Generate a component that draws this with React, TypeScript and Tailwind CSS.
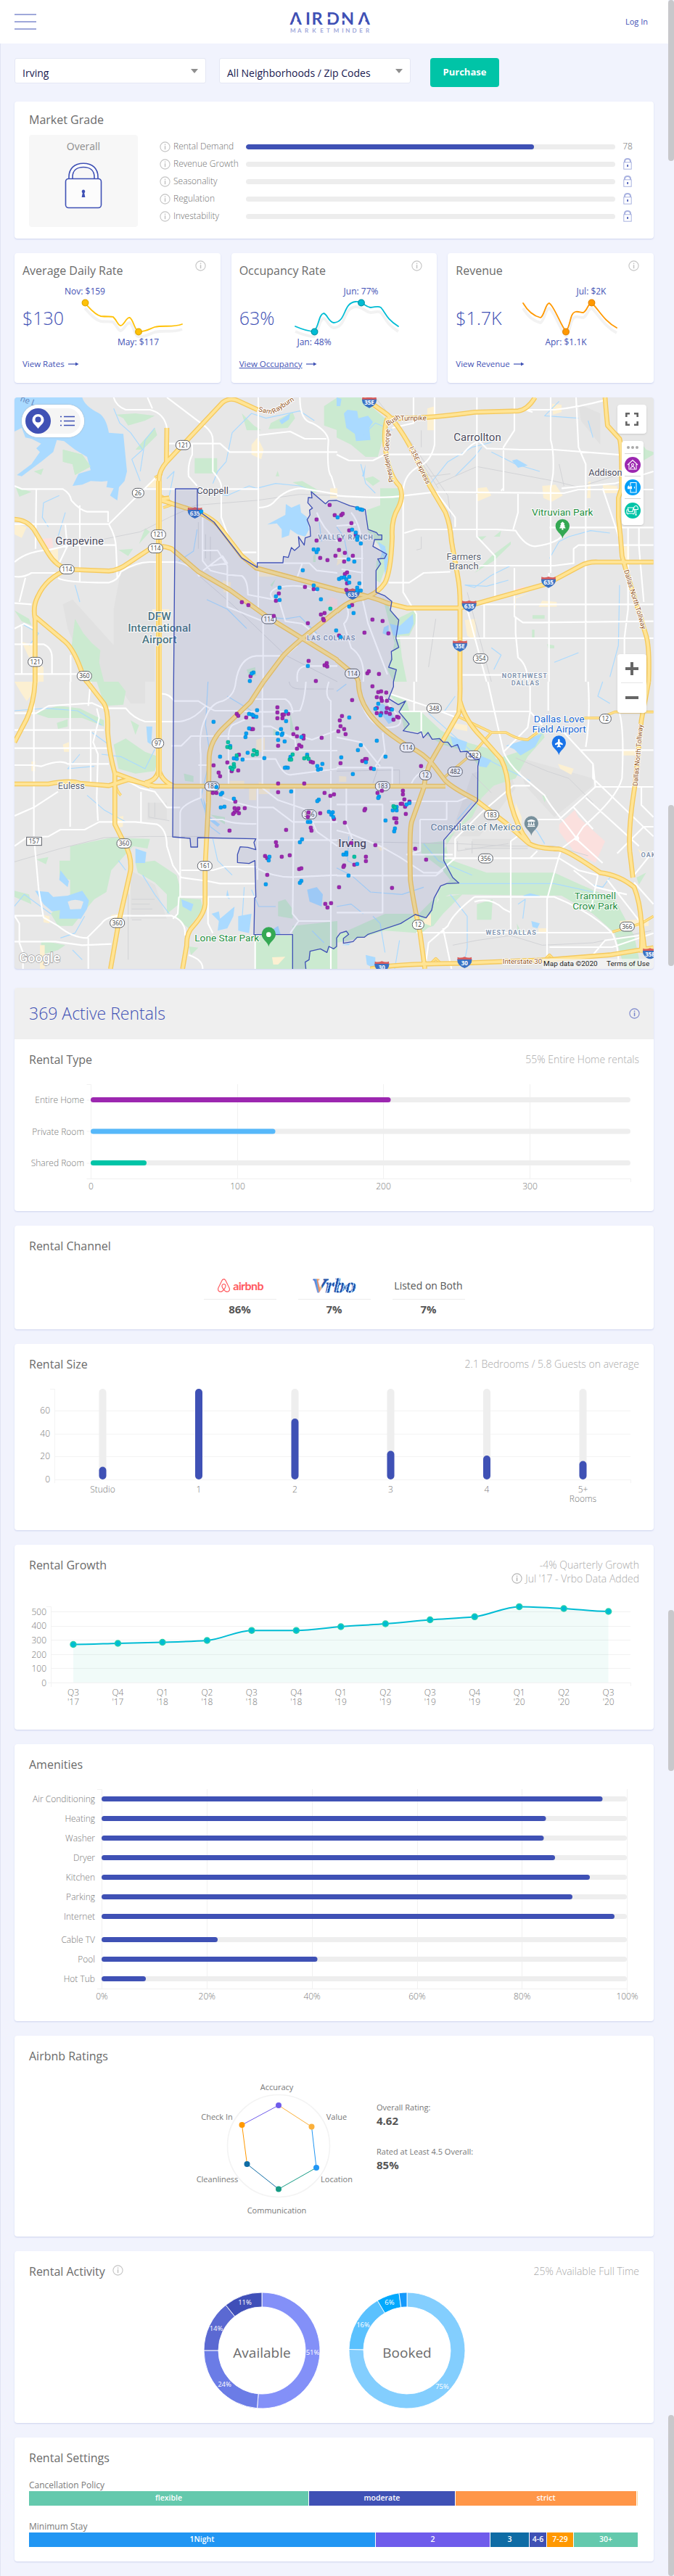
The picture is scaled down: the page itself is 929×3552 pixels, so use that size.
import React from "react";
import { FaAirbnb, FaPlane, FaTree, FaLandmark } from "react-icons/fa";

type Pt = [number, number];

const CARD = "rounded bg-white shadow-[0_1px_2px_#cdd3ee]";
const LABEL = "fill-[#777777] text-[12px] font-light";

function InfoIcon({ className = "text-[#c4c4c4]" }: { className?: string }) {
  return (
    <svg width="15" height="15" viewBox="0 0 15 15" className={`shrink-0 ${className}`}>
      <circle cx="7.5" cy="7.5" r="6.6" fill="none" stroke="currentColor" strokeWidth="1.1" />
      <rect x="6.8" y="3.6" width="1.5" height="1.5" fill="currentColor" />
      <rect x="6.8" y="6.2" width="1.5" height="5" fill="currentColor" />
    </svg>
  );
}

function CardHead({ title, note, children, h }: { title: string; note?: string; children?: React.ReactNode; h: string }) {
  return (
    <div className={`flex justify-between px-5 pt-4 ${h}`}>
      <h2 className="flex gap-[10px] text-[16px] leading-6 text-[#6b6b6b]">
        {title}
        {children}
      </h2>
      {note && <span className="text-[14px] font-light leading-6 text-[#a9a9a9]">{note}</span>}
    </div>
  );
}

function BigLock() {
  return (
    <svg width="52" height="64" viewBox="0 0 52 64" fill="none" stroke="#3f51b5" strokeWidth="1.6">
      <path d="M6 22V20C6 8 14 1.2 26 1.2S46 8 46 20V22" fill="#fff" />
      <path d="M11 22V20C11 11 17 6.5 26 6.5S41 11 41 20V22" fill="#f7f7f7" />
      <rect x="1.5" y="22.5" width="49" height="40" rx="4" fill="#fcfcfc" />
      <path d="M26 37.5a2.6 2.6 0 0 1 1.2 4.7L28.4 48h-4.8l1.2-5.8A2.6 2.6 0 0 1 26 37.5Z" fill="#3f51b5" stroke="none" />
    </svg>
  );
}

function SmallLock() {
  return (
    <svg width="12" height="16" viewBox="0 0 12 16" fill="none" stroke="#a9b2e0">
      <path d="M2 6V4.5C2 2 3.6 1 6 1s4 1 4 3.5V6" strokeWidth="2" />
      <rect x="0.8" y="5.8" width="10.4" height="9.4" />
      <rect x="5.3" y="9" width="1.6" height="3" fill="#3f51b5" stroke="none" />
    </svg>
  );
}

function Header() {
  return (
    <header className="flex h-[60px] items-center bg-white pl-5 pr-7">
      <div className="flex w-[120px] flex-col gap-2">
        <span className="h-[2px] w-[30px] bg-[#9fa8da]" />
        <span className="h-[2px] w-[30px] bg-[#9fa8da]" />
        <span className="h-[2px] w-[30px] bg-[#9fa8da]" />
      </div>
      <div className="flex flex-1 justify-center">
        <svg width="116" height="36" viewBox="400 13 116 36" className="mr-[1px] overflow-visible">
          <text x="401.500 423 431.500 452 472 495.500" y="35" className="fill-[#3f51b5] font-['Lato'] text-[23.500px] font-bold">AIRDNA</text>
          <path d="M409.300 23L413.600 35.500H405.200ZM503.300 23L507.600 35.500H499.200Z" fill="#fff" />
          <path d="M452 24.500h6v3h-6zM472 26.500h5v3h-5z" fill="#fff" />
          <text x="402 411.900 422 432.200 443.200 452 461.700 473.200 478.200 487.600 497.200 506" y="46" className="fill-[#9fa8da] font-['Lato'] text-[8px] font-bold">MARKETMINDER</text>
        </svg>
      </div>
      <div className="w-[120px] text-right text-[11px] text-[#3f51b5]">Log In</div>
    </header>
  );
}

function Select({ text }: { text: string }) {
  return (
    <div className="flex h-[35px] w-[264px] items-center justify-between rounded-[3px] border border-[#e4e7f4] bg-white pl-[10px] pr-[10px] text-[14px] font-medium text-[#17174f]">
      <span className="pt-[5px]">{text}</span>
      <svg width="10" height="6" viewBox="0 0 10 6">
        <path d="M0 0h10L5 6z" fill="#8f8f8f" />
      </svg>
    </div>
  );
}

function MarketGrade() {
  return (
    <section className={`mt-5 h-[189px] ${CARD}`}>
      <h2 className="px-5 pt-[13px] text-[16px] leading-6 text-[#6b6b6b]">Market Grade</h2>
      <div className="mt-[9px] flex pl-5">
        <div className="flex h-[127px] w-[150px] flex-col items-center rounded bg-[#f7f7f7] pt-[6px] text-[14px] leading-5 text-[#8d8d8d]">
          Overall
          <div className="mt-3">
            <BigLock />
          </div>
        </div>
        <div className="ml-[30px] mt-1 flex flex-col text-[12px] font-light text-[#6f6f6f]">
          {["Rental Demand", "Revenue Growth", "Seasonality", "Regulation", "Investability"].map((name, i) => (
            <div key={name} className="flex h-6 items-center">
              <InfoIcon />
              <span className="w-[104px] pl-1">{name}</span>
              <span className="flex h-[7px] w-[509px] overflow-hidden rounded-full bg-[#ededed]">
                {i === 0 && <span className="h-full w-[78%] rounded-full bg-[#3f51b5]" />}
              </span>
              <span className="ml-[11px] flex w-3 justify-center">{i === 0 ? <span>78</span> : <SmallLock />}</span>
            </div>
          ))}
        </div>
      </div>
    </section>
  );
}

interface Stat {
  title: string;
  value: string;
  link: string;
  underline?: boolean;
  color: string;
  ring: string;
  line: string;
  dots: Pt[];
  labels: { x: number; y: number; t: string }[];
}

const STATS: Stat[] = [
  {
    title: "Average Daily Rate", value: "$130", link: "View Rates", color: "#ffc107", ring: "#e0a800",
    line: "M117 78C123 84 130 94 139 96C147 97 154 96 156 97C162 103 162 108 166 109C171 109 174 97 179 98C184 101 186 117 191 117C200 118 205 114 213 111C225 108 238 112 251 107",
    dots: [[117.500, 77.500], [191, 117.500]],
    labels: [{ x: 117, y: 66, t: "Nov: $159" }, { x: 190.500, y: 136, t: "May: $117" }],
  },
  {
    title: "Occupancy Rate", value: "63%", link: "View Occupancy", underline: true, color: "#00bcd4", ring: "#0097a7",
    line: "M407 110C414 113 423 117 433 117C440 109 439 94 446 92C451 93 453 104 460 105C478 104 472 78 490 76C499 75 503 83 511 84C517 84 520 81 525 84C532 92 532 99 549 110",
    dots: [[433.500, 117.500], [498, 77.500]],
    labels: [{ x: 497.500, y: 66, t: "Jun: 77%" }, { x: 433, y: 136, t: "Jan: 48%" }],
  },
  {
    title: "Revenue", value: "$1.7K", link: "View Revenue", color: "#ff9800", ring: "#e58600",
    line: "M721 78C728 90 737 96 745 98C750 96 752 78 757 78C764 82 773 109 780 117C787 109 785 92 793 90C797 89 800 91 804 91C810 88 810 78 816 78C826 88 833 103 850 112",
    dots: [[780, 117.500], [815.500, 77.500]],
    labels: [{ x: 815, y: 66, t: "Jul: $2K" }, { x: 780, y: 136, t: "Apr: $1.1K" }],
  },
];

function StatCard({ s, i }: { s: Stat; i: number }) {
  const left = [100, 399, 697][i];
  return (
    <section className={`flex h-[179px] flex-1 flex-col pl-[11px] pr-5 ${CARD}`}>
      <div className="flex h-[49px] justify-between">
        <h2 className="pt-3 text-[16px] leading-6 text-[#6b6b6b]">{s.title}</h2>
        <span className="pt-[10px]"><InfoIcon /></span>
      </div>
      <div className="flex h-[96px] text-[#3f51b5]">
        <div className="w-[69px] whitespace-nowrap pt-[22px] text-[25px] font-light leading-9">{s.value}</div>
        <svg width="174" height="96" viewBox={`${left} 58 174 96`} className="overflow-visible">
          <path d={s.line} fill="none" stroke="#000" strokeOpacity="0.05" strokeWidth="4" transform="translate(0 7)" />
          <path d={s.line} fill="none" stroke={s.color} strokeWidth="1.800" strokeLinecap="round" />
          {s.dots.map(([x, y]) => (
            <circle key={x} cx={x} cy={y} r="4.300" fill={s.color} stroke={s.ring} strokeWidth="1.300" />
          ))}
          {s.labels.map((l) => (
            <text key={l.t} x={l.x} y={l.y} textAnchor="middle" className="fill-[#3f51b5] text-[12px]">{l.t}</text>
          ))}
        </svg>
      </div>
      <div className="flex items-center gap-1 text-[11.500px] leading-4 text-[#3f51b5]">
        <span className={s.underline ? "underline" : ""}>{s.link}</span>
        <svg width="17" height="8" viewBox="0 0 17 8"><path d="M1 4h11" stroke="#3f51b5" strokeWidth="1.200" /><path d="M11 1.500l4.500 2.500-4.500 2.500z" fill="#3f51b5" /></svg>
      </div>
    </section>
  );
}

/* ---------- map ---------- */
const TILES: Pt[] = [[0, 0], [1392, 0], [0, 1200], [1392, 1200]];
const at = (tile: number, pts: Pt[]): Pt[] => pts.map(([x, y]) => [x + TILES[tile][0], y + TILES[tile][1]]);

function Layer({ d, ...rest }: { d: string[] } & Omit<React.SVGProps<SVGPathElement>, "d">) {
  return (
    <>
      {d.map((p, i) => (
        <path key={i} d={p} transform={`translate(${TILES[i][0]} ${TILES[i][1]})`} {...rest} />
      ))}
    </>
  );
}

const TERRAIN = [
  "M260 880L300 860L480 1060L470 1200H370L280 980ZM500 740L640 700V1200H470V900Z",
  "M1000 50L1090 90V220L1010 120Z",
  "M480 0H600V90H540ZM540 780L640 840L690 980H540ZM610 500H690V570H610Z",
  "M560 380L700 330L740 440L590 640L470 640ZM740 310L1060 400V430L900 560L780 430ZM560 650H720V690H560Z",
];
const PARKS = [
  "M480 95L560 90L640 100L600 120L530 140L510 110ZM805 275H898V338H805ZM310 940L345 1000L380 1040L415 1070L410 1120L430 1200H370L330 1120L295 1060ZM1000 90L1050 140L1080 160L1020 160ZM1120 130L1210 85L1220 110L1190 150L1110 155ZM1340 60L1395 24V160L1340 140ZM65 395L130 415L80 435ZM140 330L180 318L170 345ZM490 655L550 650L530 680ZM600 565L620 580L575 630ZM640 150L650 180L590 240L560 240ZM400 150L440 170L450 200ZM1210 375L1250 370L1320 410L1300 420ZM1295 680L1305 670V705H1295ZM1140 775L1125 808L1118 800ZM1020 1150L1055 1140L1060 1175L1030 1180ZM1140 350L1148 328L1155 350ZM260 240L340 260L375 310L310 345L300 300L260 290ZM60 905L120 940L130 965L90 950Z",
  "M0 24H100L200 110L190 200L170 270L120 270L60 220L0 190ZM180 400L265 400L260 460L230 540L220 680L180 790L160 780L165 700L200 670L130 580L125 490L180 470ZM150 350L115 360L150 390L180 370ZM190 850L250 940L320 905L330 930L325 960L300 1010L260 1010L270 1100L290 1200H235L210 1150L240 1040L215 950ZM580 740L640 680L720 620V632L650 700L570 750ZM580 600L620 598L600 615ZM650 600L680 575L675 600ZM810 925H860V940H810ZM808 985H818V1020H808ZM870 1045L900 1050V1062H875ZM1250 200L1280 240L1310 250V260L1260 290Z",
  "M140 130L240 100L330 110L430 160V185L340 150L200 150ZM400 0H490L520 40L510 95L440 100L420 60ZM540 160L575 180L560 220ZM470 260L520 235L600 290L655 310L640 370L560 380L490 360ZM290 680L460 645L620 650L610 690L550 680L460 780L440 870L390 900L340 960L300 1010L240 1010L210 960L290 880V820L246 810V740H290ZM560 750L640 740L730 800L750 870L740 920L690 960V880L640 830L570 790ZM740 895L830 900L840 940L780 1020L730 980ZM1055 1050H1210V1188H1055ZM1210 1010L1395 990V1188H1210ZM170 1070L270 1090L240 1110L170 1130ZM60 865L120 880L130 920L60 890ZM235 170L280 155V185L240 195ZM870 550L930 560V590ZM1200 130L1218 210L1200 200ZM1150 910L1180 900L1210 940V980L1150 970ZM780 1095L820 1100L790 1130ZM150 735L200 725L190 755ZM760 380L800 390V415L765 410ZM1130 195H1170V225H1130Z",
  "M215 50L290 80L300 120L350 125L430 200L500 240L640 280L660 320L750 290L850 200L860 230L790 310L740 400L650 430L600 480L560 560L450 650L460 720L440 700L490 620L580 500L590 350L540 290L440 260L350 210L280 200L260 100ZM350 670L440 660L450 720L480 740L620 790L900 790L1010 840L1150 900L1230 1050L1260 1188H1190L1150 1040L1060 960L930 885L470 880L420 900V860L470 820L430 770L350 710ZM580 920L645 900L640 985H580ZM0 1050L200 960L340 960L420 880L400 1000L350 1040L200 1030L100 1060L0 1080ZM430 890L520 880L440 960L400 1010L340 1030ZM1240 810L1280 790L1250 840ZM745 1000L760 1030L790 1050L750 1050ZM850 470L870 475L860 500Z",
];
const TAN = [
  "M1040 220L1065 190L1090 240L1080 280L1040 260ZM60 545L110 560L90 605L60 590ZM600 395L650 345V398ZM210 650L240 650V720L215 700ZM920 780L955 790L950 830L925 830ZM1065 725L1165 745L1140 765H1070ZM1365 400H1395V440H1365ZM690 240L715 260L695 290ZM630 900H700V930H630ZM90 1035L140 1050L150 1090L120 1100ZM145 1120L180 1140V1200H150Z",
  "M375 70L405 60V160H375ZM580 400L620 395L640 430L580 455ZM850 390L905 385L935 430L890 455L855 440ZM890 50L930 55V85L895 95ZM1100 385L1160 390V420H1105ZM1185 640L1210 640V700H1185ZM730 860L800 830L740 850V900ZM850 865L910 870V890H835ZM530 945L575 940V1030L540 1010ZM10 660L30 700L0 720ZM1040 375L1050 370L1050 440H1035Z",
  "M60 0H160L135 50L110 80L90 50ZM260 260L285 250V290H265ZM130 330H145V370H130ZM485 560L510 555L508 600L485 605ZM950 410H1010V445H950ZM1060 240L1095 230V290H1060ZM1030 440H1060V490H1030ZM1070 415L1115 430V465H1070ZM460 965L490 960V990H460ZM180 965L205 970V1000L180 995ZM1125 1140L1180 1138L1150 1170H1130ZM525 850L540 840L535 880H525ZM165 1090H185V1188H165Z",
  "M10 390L40 392V415H10ZM480 170L540 180V205L490 195ZM915 340L980 360L970 385L925 360ZM740 500L765 560V590L740 560ZM1185 280L1240 285V305H1185ZM1170 990L1290 980V1010L1180 1020ZM160 670L210 690L180 700ZM835 1020H870V1035H835ZM350 995L390 960V1010ZM1245 690L1270 710L1260 720Z",
];
const PINK = [
  "M165 610L215 605L220 645L180 655ZM1345 875L1370 850L1395 860V905Z",
  "M730 820L775 805V815L735 830Z",
  "",
  "M985 530L1000 560L1110 660L1070 750L980 700L920 620V590Z",
];
const WATER = [
  "M60 24H340Q350 60 410 90Q440 110 450 170L510 175L525 330L515 370L492 395L485 450L470 440L455 430L470 400L440 395L445 370L420 372L375 370L340 385L300 390L325 340L375 325L360 270L310 240L265 205L235 200L220 250L170 290L90 350L70 345L130 300L165 250L150 235L170 215L130 195L105 190L90 150L60 165ZM1105 550L1180 510L1182 465L1205 480L1240 465L1245 500L1270 520L1278 570L1262 600L1230 590L1200 570L1195 595L1165 605V570L1145 545ZM1155 120L1200 90L1195 115L1165 135Z",
  "M30 90L45 75L85 80L90 110L130 100L150 125L135 150L140 200L80 205L75 175L40 150ZM0 24L20 30L15 60L0 60ZM235 1010L220 960L260 970L315 920L318 960L300 1000L260 1005ZM725 285L745 280L790 305L750 315ZM195 975L215 965V1010L190 1000ZM170 620L200 640L215 700L200 760L195 690ZM120 300L105 350L115 350ZM1205 245L1240 250V262L1205 255Z",
  "M145 865L200 870L220 890L280 885L340 865L368 905L360 940L335 980L245 980L248 945L215 950L180 920ZM605 185L630 185L625 260L610 250ZM560 690L605 705L600 750H560ZM250 780L285 825L280 850L245 820ZM875 960L905 950L910 980L970 930L965 970L940 1020L900 1030L905 990ZM985 970L1040 960L1030 1040L985 1030ZM1270 860L1310 850L1335 880L1330 930L1280 910ZM1090 1020L1120 1030L1150 1010L1160 1045H1100ZM840 480L870 560L910 590L900 600L850 560ZM940 860L950 900L935 890ZM750 900L800 920L790 950L755 930Z",
  "M470 225L540 250L530 290L480 260ZM580 300L640 325L620 355L590 350ZM700 265L780 240L850 215L820 270L760 305L735 280ZM120 1130L160 1140V1188L125 1170ZM170 100L190 90L220 115L245 160L215 175L190 140ZM805 990L840 1000L830 1020L810 1015ZM770 885L800 875L840 885V890H780ZM20 1090L60 1080L50 1090Z",
];
const STREAMS = [
  "M470 70L495 130L540 170L590 240L545 280L580 370M640 150L600 200L580 330M860 410L940 430L1030 390L1060 400L1140 380L1240 390L1290 410M880 380L900 330L935 290L960 170L1040 90L1100 110L1240 80L1300 120M245 430L180 460L175 520L200 560M270 500L240 600L280 640M90 960L160 1000L120 1050M740 700L800 660L815 570M855 860L940 900L1020 980M1090 930L1180 940L1240 930L1310 1000M310 800L330 870M1320 540L1330 620M700 430L720 330L690 360",
  "M110 180L160 130L230 160M100 300L120 380L160 420M380 390L460 290L560 230L640 210M640 250L740 300L840 330M530 800L570 810L640 760L720 720L800 720M530 800L620 805L710 780M880 690L920 620L960 600L1050 575L1130 585M1170 800L1165 1050L1130 1180M490 350L570 270L600 230M920 40L860 100L1000 110M1040 120L1060 190M0 560L30 600L50 700M640 1060L680 1090L650 1150M900 1120L1000 1080M170 720L200 640",
  "M60 120L190 110L320 120L420 180M420 300L500 310L600 360L640 280M360 470L430 530L520 580M450 260L380 210M590 800L640 880L700 960M860 0L850 180L870 310L830 480L870 600L910 630M880 650L900 740L960 800M330 300L280 360L390 350M0 1000L100 880L210 960M350 970L310 1040L250 1060M300 1110L340 1150M1010 850L1000 1000M1040 860L1070 930L1140 930M1290 1030L1340 1080M490 740L520 780M940 60L1040 120",
  "M0 40L40 10M0 930L60 920L110 960M50 640L45 740L80 760M0 770L60 800L140 870L270 880L360 850M490 60L440 130M380 130L560 290L800 410M360 670L420 740L560 800M470 880L540 970L540 1100L530 1150M510 835H900L1060 870M750 920L780 900L770 980M800 590L830 620L860 670M1100 0L1080 60L1130 90M200 1120L180 1000L150 970M1060 840L1100 850L1130 810M240 1188L260 1070M500 570L560 500",
];
const RAILS = [
  "M430 610L580 580L700 520L810 470L1060 450L1240 425L1395 430M820 540V650M850 590V690M870 600V700M810 750L960 880L1180 1090L1395 1200",
  "M160 24L300 200L460 430L500 740M240 120L420 400M410 385L580 310L900 370L1000 395L1210 330M350 330L390 350L470 340M350 600V650L330 655M350 160V230M920 300L940 390M540 830L640 1200M410 940L380 1140",
  "M60 745L250 690L430 645L620 640H850M545 780L530 870V1150M545 900H640M545 920H620M545 940H630M545 965H600M545 985H585M615 500V560L700 575M640 500V560M1195 0Q1200 30 1240 30H1380",
  "M0 660L500 670L720 680L900 680L1040 720M740 315L870 370L960 400L1060 500M560 380L640 460M500 660V700L710 670M0 370L260 365V430M480 1090L580 1070L720 1050L850 1090L1060 1080L1300 1030M530 690H790M560 660V710M150 420L180 330",
];
const ROADS = [
  "M470 24Q480 60 520 75H620Q680 90 690 150M610 24L630 70M690 24L850 145Q880 170 880 200V330Q915 370 915 390V520L945 600M695 215H910L950 250H1395M1068 24V900M795 215V260Q775 300 780 350L815 390M60 390L90 403H260Q290 420 295 450Q330 490 360 497H447V540M600 403H1068M60 548H450L670 330M150 405L147 650M330 470V785M450 548Q480 600 480 650L485 770M60 705Q110 660 200 655L290 635H480M60 765Q100 770 130 750H240M240 770Q260 790 450 790Q490 780 500 745Q560 705 620 705H730Q800 720 825 765M1068 480Q1110 480 1130 460Q1180 400 1250 400L1395 425M1240 24Q1240 120 1290 130Q1350 160 1358 200Q1350 330 1370 350L1385 400M1070 180L1200 165L1260 195H1350M60 1045H180Q215 1060 215 1100V1168M60 1168H330M90 970V1168M60 875L130 880M292 1090V1200M60 980L100 960L140 980M838 520V700L870 740Q940 760 1000 762Q1025 780 1025 840Q1080 850 1130 860Q1100 830 1150 810Q1250 790 1310 830M940 720V890L1088 950V1200M975 1200Q990 1100 1060 1093H1180L1230 1050M1068 710H1280L1310 740L1395 750M1310 500Q1330 560 1395 620M1150 850L1180 950L1250 960L1310 1010M840 740L920 680L940 710L870 720M838 657H900L940 720M980 665H1060M1225 780L1250 710M1230 1200Q1220 1130 1280 1135H1395M270 550L278 640L240 720M105 770L80 870",
  "M0 430Q200 445 280 430L410 415L940 420L1000 405H1310M0 260L50 285H150L200 260H520Q560 210 590 205L620 235L760 240H900L1180 262M318 24V130L230 150M405 24V220Q390 290 340 310Q280 340 275 410V830L330 920V1200M580 24V600L655 680V850M735 24V160L690 230V410M885 24V200Q900 250 895 340L885 400V750M990 24L1000 230L1030 300V1200M780 75L810 85M780 75H900Q1000 65 1110 35M280 585L330 570H660L740 575Q780 640 820 640Q900 630 930 600M1310 330L1150 380L1030 390L930 400M1100 400L1180 640M880 562H1310M590 720H900L980 710V650L1000 635H1310M215 790H300L360 750L470 745M560 880H1310M750 420V500L730 570M735 730V930L770 955H850L1310 950M740 930V1000L750 1100Q790 1130 790 1200M240 1020H1310M540 900L620 1200M878 750V1200M610 880V1020M520 1172H700M1205 560V900L1190 1020V1200M1250 560V640L1270 870M60 500Q110 560 105 700V850L130 960L210 1170M0 690H110M0 555L80 550M20 735L110 750M40 880Q60 930 30 960L60 1060Q120 1100 110 1200M410 415L490 520V560M690 400L680 410",
  "M60 130H150L200 100L380 88L430 110H520Q550 150 600 165H740Q800 160 850 100M670 50Q700 50 720 80H820Q880 120 890 120H980Q1080 130 1240 120Q1260 80 1265 0M975 0Q970 60 920 80Q870 90 850 150Q820 210 830 300V480Q750 510 745 540V890M60 200H150L170 200H430M60 275H450M140 0V640L160 860L180 975L240 1010Q300 1060 360 1060L420 1000Q440 970 500 968H710Q770 990 765 1050M60 968H180M290 0V600M375 0L365 100M375 200V420M60 345H130L170 350Q250 320 280 340H450M400 110L410 150L385 250L405 300L400 480L405 575M60 555L140 520L240 455M60 680L110 645L200 640L250 612H350L410 580H560L650 590Q690 610 690 680L715 760L750 810L860 825L910 835H1055M480 385L580 440L640 455L690 520H745M583 455V580M750 780H880L930 765H1060M740 890H1055M860 890V1000L880 1040M740 890L735 960L715 980M60 968L80 1000V1080L95 1120V1188M60 1075H230L340 1090L460 1085M365 1060V1188M780 1130Q840 1150 838 1188M1055 1046V1188M710 265H750L790 225H1240L1290 240L1395 200M1085 0V430M1065 430V820M1085 285H1395M920 480Q1000 510 1060 520H1130L1210 580H1395M1085 440L1150 490L1270 530L1310 620L1395 680M1060 655H1395M1060 770Q1130 810 1210 808L1395 800M1217 430L1210 960L1235 990H1365M1235 990L1200 1040M865 570H920Q960 590 1060 588M1000 320H1140Q1170 385 1200 385L1395 360M1360 0Q1340 60 1368 80V1188M945 430V260Q940 200 960 180L1050 140M1050 72H1180Q1210 90 1210 130M1085 185H1120L1220 240L1225 285M820 345H865",
  "M220 50L370 100L500 150M260 123H800V0M350 125V225M320 0V120M625 0L690 290Q710 340 760 385L860 470Q880 510 940 580L990 645M690 290L790 190L800 125M940 210L1060 340V400L1310 640M1010 283H1310M1040 0Q1050 150 1030 270M800 123L850 180M1180 0L1170 130Q1190 200 1180 400Q1160 480 1020 600L990 645M1065 435H1310M1070 435L920 570H830M800 430H730L600 540L490 650V730M440 730H920L1000 780L1080 800M990 645L930 690Q910 750 870 900V1188M990 650L1100 750M1030 480L1250 680M980 520L1060 610M1310 600H1270L1160 710M720 1040V660L760 630M570 890H900Q1050 950 1140 1040Q1170 1100 1165 1188M570 890Q480 960 460 1010L380 1080L365 1188M330 1038H1140M440 1020L475 1188M570 910Q640 890 690 940L720 955M880 1098H1140L1310 1040M0 355H230V430M0 508H190V955H0M220 495H500L560 470M345 570V700L290 715H480M345 570H455V495M40 430V590L65 650M0 615L60 630L180 680L260 725L360 790H420L490 730M0 802H410L440 780M100 80Q130 180 200 190Q280 190 260 150L190 60M0 230L100 250L180 350M1080 800L1050 950M980 780L1070 850L1200 880M1230 800L1310 700M1230 830L1310 920M1120 820L1260 1000M875 0V120M190 210L200 290L160 350M1060 1130L1110 1070L1250 1050M800 730L830 700M310 420Q320 390 370 360M1060 340L1070 435M1260 435V510L1310 560",
];
const HIGHWAYS = [
  "M1065 75L985 38Q950 22 920 45L770 205L690 290Q655 330 658 370V1200M690 150L688 290M60 528Q110 530 140 570L200 670Q230 720 280 735L450 742Q490 740 530 710L620 650Q660 630 710 650L820 745L950 820L1110 935L1395 1110M280 735Q190 770 155 850Q135 890 145 940V1200M145 930L270 1035Q310 1070 345 1180L360 1202M670 450L780 485Q860 510 900 550L1000 680L1060 730L1395 820M1090 1200L1165 1100Q1180 1080 1250 1020L1395 905M660 445L700 440",
  "M110 24L210 95Q250 130 300 220L385 390L450 500Q470 550 475 620L500 760Q512 820 510 900V1200M210 110Q350 115 570 85L750 80Q790 75 820 24M210 110Q190 160 205 260Q220 350 260 390Q280 430 255 480Q225 530 230 600Q225 740 200 790Q160 850 80 860Q30 880 0 910M0 820L80 835Q150 850 210 875L290 895H510L550 885L870 795L1010 720Q1040 703 1080 705H1310M1110 24Q1115 90 1120 140L1170 195Q1180 230 1178 400L1165 440V520Q1175 600 1180 680L1200 750L1280 1010Q1295 1060 1290 1200M0 1110L60 1160Q85 1180 90 1200",
  "M145 0Q140 90 110 155L60 250M657 0V390M657 360Q650 410 600 418M657 360Q665 410 720 432M360 0L430 90Q448 120 445 200Q450 290 475 380V590L515 670Q545 720 540 780L490 1000L457 1188M60 423H200Q290 405 330 420L450 430L530 405L640 432H1395M480 380Q560 410 620 432M1090 0L1035 85L930 185Q870 240 865 310L862 500L848 770V920Q845 960 800 1010Q770 1040 772 1090L755 1188",
  "M90 0Q90 80 150 150Q200 210 300 270Q360 295 400 345L450 410Q480 440 570 485L700 585L790 665Q820 690 920 692Q960 700 1090 790Q1170 800 1230 850Q1270 950 1260 1120M510 0Q512 70 505 130L390 330Q370 370 360 440L310 580Q300 620 305 820Q315 900 345 1040L365 1188M510 80Q530 160 600 230L680 320Q710 380 710 460Q730 560 770 630L795 665M0 432H450M1290 0L1260 160L1235 420Q1205 600 1212 700L1225 810M140 1188Q220 1168 500 1165L880 1150L1130 1130L1310 1100M1260 1000L1275 1120",
];
const RAMPS = ["M640 355L670 340M665 430L720 465L675 480", "", "M480 380Q470 440 500 470M440 430L520 400", "M505 145L640 210H700Q750 240 790 240L830 210M640 210L570 290L440 400M940 165L1030 150H1090L1150 125H1310M1140 1035L1260 1000L1310 970M390 1165L410 1145L430 1165M860 1150L880 1130L900 1150"];

const BOUNDARY: Pt[] = [
  ...at(0, [[725, 402], [816, 402], [816, 490], [885, 540], [1000, 688], [1064, 727], [1064, 708], [1170, 708], [1172, 682], [1192, 686], [1205, 645], [1218, 657], [1238, 640], [1234, 600], [1258, 635], [1262, 605], [1284, 598], [1282, 560], [1270, 530], [1282, 510], [1280, 490], [1292, 482], [1273, 460], [1275, 438], [1290, 440], [1287, 414], [1346, 464], [1360, 451]]),
  ...at(1, [[0, 450], [55, 472], [118, 487], [130, 570], [165, 583], [172, 593], [187, 593], [187, 612], [157, 612], [150, 640], [207, 672], [198, 690], [170, 692], [182, 712], [163, 740], [163, 830], [200, 845], [228, 868], [222, 905], [257, 945], [245, 1020], [257, 1058], [226, 1075], [228, 1108], [215, 1140], [247, 1150], [235, 1200]]),
  ...at(3, [[235, 20], [215, 70], [255, 95], [285, 80], [258, 125], [300, 175], [275, 203], [335, 215], [350, 207], [358, 232], [378, 210], [395, 238], [425, 235], [440, 250], [460, 250], [475, 270], [500, 260], [512, 290], [540, 288], [570, 320], [590, 320], [584, 350], [583, 493], [443, 655], [443, 740], [480, 810], [506, 833], [455, 835], [430, 845], [403, 895], [393, 945], [370, 977], [325, 963], [265, 1000], [130, 1045], [115, 1057], [85, 1057], [68, 1075], [28, 1082], [28, 1062], [50, 1045], [40, 1032], [15, 1040], [0, 1060]]),
  ...at(2, [[1392, 1095], [1380, 1105], [1360, 1095], [1352, 1120], [1325, 1105], [1282, 1115], [1278, 1150], [1262, 1160], [1265, 1190], [1210, 1190], [1210, 1046], [1050, 1046], [1053, 895], [1058, 890], [1054, 740], [1030, 752], [982, 748], [982, 715], [993, 683], [1025, 685], [1058, 695], [1050, 665], [1058, 650], [817, 645], [817, 684], [789, 684], [786, 648], [714, 642], [718, 0]]),
];

const PURPLE: Pt[] = [
  ...at(0, [[1363, 469], [1384, 511], [1309, 529], [1309, 616], [1324, 688], [1354, 697], [1387, 679], [1261, 808], [1297, 817], [1153, 835], [1141, 865], [1000, 871], [1027, 883], [1132, 928], [1342, 916], [1327, 922], [1336, 940], [1339, 946], [1273, 958], [1276, 1114], [1351, 1123], [1342, 1132], [1353, 1137], [1036, 1177], [1306, 1197]]),
  ...at(1, [[19, 511], [25, 505], [61, 544], [52, 574], [13, 613], [79, 592], [10, 655], [34, 667], [67, 679], [31, 703], [43, 748], [34, 755], [43, 793], [40, 820], [64, 883], [148, 943], [190, 949], [115, 997], [214, 1000], [10, 1009], [127, 1165], [133, 1157], [175, 1168]]),
  ...at(2, [[979, 133], [985, 141], [1018, 148], [1048, 145], [1040, 196], [1046, 196], [1147, 106], [1147, 127], [1147, 151], [1168, 136], [1168, 151], [1192, 133], [1174, 136], [1228, 193], [1213, 217], [1228, 226], [1255, 223], [1255, 235], [1330, 232], [1237, 262], [1246, 268], [1228, 277], [1150, 265], [988, 302], [940, 334], [883, 346], [904, 376], [910, 391], [958, 370], [985, 367], [1285, 331], [1294, 334], [1150, 421], [1258, 421], [1150, 457], [880, 460], [895, 460], [1342, 460], [1366, 472], [1381, 466], [973, 496], [1012, 523], [970, 523], [986, 524], [980, 533], [970, 540], [988, 544], [964, 547], [1276, 541], [1273, 559], [1324, 544], [1381, 568], [1285, 604], [1288, 616], [949, 616], [1183, 613], [1141, 664], [1144, 679], [1096, 721], [1105, 730], [1165, 724], [1198, 718], [1237, 775], [1246, 772], [1105, 799], [1345, 919], [1369, 916], [1354, 934]]),
  ...at(3, [[148, 19], [64, 76], [172, 43], [184, 40], [205, 45], [166, 64], [184, 67], [187, 79], [208, 79], [208, 109], [166, 109], [166, 130], [184, 130], [205, 127], [220, 133], [223, 113], [250, 145], [256, 148], [235, 157], [22, 142], [13, 160], [16, 184], [31, 196], [7, 205], [37, 217], [16, 337], [106, 328], [118, 320], [124, 320], [142, 358], [349, 349], [169, 460], [187, 451], [274, 451], [274, 466], [280, 487], [265, 505], [271, 505], [301, 496], [283, 517], [286, 547], [118, 526], [115, 532], [238, 565], [247, 566], [247, 583], [34, 583], [61, 667], [160, 676], [325, 691], [370, 736], [121, 724], [121, 742], [73, 757], [31, 760], [28, 766], [10, 850], [229, 853]]),
];
const BLUE: Pt[] = [
  ...at(0, [[832, 496], [1297, 653], [1315, 653], [1309, 664], [1252, 739], [1297, 802], [1312, 817], [1156, 811], [1141, 847], [1156, 862], [1327, 859], [1390, 988], [1273, 1135], [1048, 1162], [1041, 1166], [1033, 1197]]),
  ...at(1, [[4, 520], [85, 482], [98, 487], [106, 489], [64, 571], [79, 583], [85, 600], [85, 613], [100, 628], [49, 694], [73, 703], [10, 775], [20, 770], [32, 768], [40, 777], [52, 766], [52, 790], [94, 793], [85, 811], [100, 823], [85, 823], [52, 889], [70, 916], [16, 1015]]),
  ...at(2, [[883, 166], [1063, 118], [1030, 133], [1042, 136], [1048, 140], [1060, 145], [1030, 193], [1018, 214], [1015, 229], [1183, 123], [1183, 163], [1162, 196], [1147, 214], [1168, 214], [1165, 220], [1150, 241], [1177, 247], [1246, 229], [952, 266], [910, 310], [1024, 294], [967, 317], [979, 319], [1003, 322], [1093, 316], [1270, 302], [1201, 311], [1183, 355], [1190, 356], [1178, 356], [1312, 349], [1333, 340], [1315, 364], [1327, 361], [895, 436], [919, 460], [913, 466], [967, 484], [1204, 454], [1318, 488], [1312, 494], [1360, 538], [1376, 540], [1370, 550], [1378, 560], [913, 520], [928, 517], [1273, 580], [1283, 580], [1249, 652], [1240, 664], [1114, 724], [1111, 739], [1246, 824], [1240, 832], [1099, 838]]),
  ...at(3, [[172, 91], [160, 112], [181, 139], [229, 115], [52, 148], [166, 244], [100, 262], [88, 283], [19, 313], [202, 310], [121, 333], [154, 361], [67, 382], [175, 475], [172, 481], [289, 508], [301, 502], [248, 518], [232, 532], [248, 532], [202, 574], [241, 607], [238, 619], [40, 707], [28, 715], [40, 715], [85, 754], [49, 802]]),
];
const TEAL: Pt[] = [
  ...at(0, [[1366, 898]]),
  ...at(2, [[943, 250], [940, 270], [952, 273], [979, 305], [1050, 284], [1062, 290], [1046, 303], [1062, 300], [967, 341], [953, 355], [968, 352], [961, 362], [1210, 301], [1198, 322], [1204, 322], [1258, 317], [1270, 310], [1276, 319]]),
  ...at(3, [[235, 515], [241, 520], [73, 724]]),
];

const SHIELDS: [number, number, number, string][] = [
  [0, 757, 221, "121"], [0, 571, 419, "26"], [0, 655, 591, "121"], [0, 643, 648, "114"], [0, 277, 735, "114"], [0, 1112, 941, "114"], [0, 146, 1118, "121"], [0, 349, 1176, "360"],
  [1, 595, 1104, "354"], [1, 65, 1166, "114"],
  [2, 653, 255, "97"], [2, 877, 433, "183"], [2, 1279, 549, "356"], [2, 513, 669, "360"], [2, 847, 762, "161"], [2, 485, 998, "360"],
  [3, 403, 110, "348"], [3, 1111, 153, "12"], [3, 292, 272, "114"], [3, 566, 305, "482"], [3, 490, 372, "482"], [3, 367, 387, "12"], [3, 190, 432, "183"], [3, 641, 551, "183"], [3, 616, 731, "356"], [3, 337, 1005, "12"], [3, 1201, 1013, "366"],
];
const INTERSTATES: [number, number, number, string][] = [
  [0, 806, 502, "635"], [1, 135, 45, "35E"], [1, 66, 838, "635"], [1, 548, 888, "635"], [1, 876, 789, "635"], [1, 510, 1053, "35E"], [3, 529, 1162, "30"], [3, 187, 1180, "30"], [3, 1296, 1126, "35E"],
];
const PLACES: [number, number, number, string, string][] = [
  [0, 329, 634, "Grapevine", "fill-[#4a4a5c] text-[45px]"],
  [0, 879, 423, "Coppell", "fill-[#4a4a5c] text-[39px]"],
  [0, 659, 945, "DFW", "fill-[#4a7583] text-[46px] font-medium"],
  [0, 659, 993, "International", "fill-[#4a7583] text-[46px] font-medium"],
  [0, 659, 1042, "Airport", "fill-[#4a7583] text-[46px] font-medium"],
  [1, 582, 205, "Carrollton", "fill-[#4a4a5c] text-[45px]"],
  [1, 1111, 347, "Addison", "fill-[#4a4a5c] text-[38px]"],
  [1, 526, 696, "Farmers", "fill-[#5a5f6e] text-[39px]"],
  [1, 526, 735, "Branch", "fill-[#5a5f6e] text-[39px]"],
  [1, 934, 512, "Vitruvian Park", "fill-[#1e8e3e] text-[41px]"],
  [1, 778, 1185, "NORTHWEST", "fill-[#8496b0] text-[27px] font-bold tracking-[3px]"],
  [3, 781, 14, "DALLAS", "fill-[#8496b0] text-[27px] font-bold tracking-[3px]"],
  [1, 38, 612, "VALLEY RANCH", "fill-[#8496b0] text-[27px] font-bold tracking-[3px]"],
  [1, -22, 1029, "LAS COLINAS", "fill-[#8496b0] text-[27px] font-bold tracking-[3px]"],
  [2, 295, 445, "Euless", "fill-[#5a5f6e] text-[38px]"],
  [2, 938, 1074, "Lone Star Park", "fill-[#1e8e3e] text-[41px]"],
  [3, 65, 685, "Irving", "fill-[#4a4a5c] text-[46px] font-medium"],
  [3, 920, 168, "Dallas Love", "fill-[#1a67d2] text-[41px]"],
  [3, 920, 210, "Field Airport", "fill-[#1a67d2] text-[41px]"],
  [3, 576, 615, "Consulate of Mexico", "fill-[#5f7d95] text-[41px]"],
  [3, 1069, 900, "Trammell", "fill-[#1e8e3e] text-[41px]"],
  [3, 1069, 942, "Crow Park", "fill-[#1e8e3e] text-[41px]"],
  [3, 722, 1046, "WEST DALLAS", "fill-[#8496b0] text-[27px] font-bold tracking-[3px]"],
  [3, 1290, 726, "OAK", "fill-[#8496b0] text-[27px] font-bold tracking-[3px]"],
  [3, 768, 1166, "Interstate 30", "fill-[#94561c] text-[29px]"],
];

function Pin({ x, y, color, children }: { x: number; y: number; color: string; children: React.ReactNode }) {
  return (
    <g transform={`translate(${x} ${y})`}>
      <path d="M0 50C-4 28-29 22-29-2A29 29 0 1 1 29-2C29 22 4 28 0 50Z" fill={color} />
      {children}
    </g>
  );
}

function MapDots({ pts, fill, stroke }: { pts: Pt[]; fill: string; stroke: string }) {
  return (
    <>
      {pts.map(([x, y], i) => (
        <rect key={i} x={x - 7} y={y - 7} width="14" height="14" rx="4" fill={fill} stroke={stroke} strokeWidth="2" />
      ))}
    </>
  );
}

function CityMap() {
  const halo = { stroke: "#fff", strokeWidth: 6, paintOrder: "stroke" as const, strokeLinejoin: "round" as const };
  return (
    <section className="relative mt-5 h-[788px] overflow-hidden rounded bg-[#e7e7e7] shadow-[0_1px_2px_#cdd3ee] font-['Roboto']">
      <svg width="881" height="788" viewBox="60 24 2643 2364" className="block">
        <Layer d={TERRAIN} fill="#e1e1e1" />
        <Layer d={PARKS} fill="#cbead0" />
        <Layer d={TAN} fill="#fcf0d2" />
        <Layer d={PINK} fill="#fbe0de" />
        <Layer d={WATER} fill="#aadaff" />
        <path d="M260 240L340 260L375 310L310 345L300 300L260 290Z" fill="#cbead0" />
        <path d="M280 2110Q310 2095 345 2110L335 2140L290 2142Z" fill="#e7e7e7" />
        <Layer d={STREAMS} fill="none" stroke="#aadaff" strokeWidth="3.500" strokeLinejoin="round" />
        <Layer d={RAILS} fill="none" stroke="#d2d3d6" strokeWidth="3" />
        <Layer d={ROADS} fill="none" stroke="#ffffff" strokeWidth="6.500" strokeLinejoin="round" />
        <Layer d={RAMPS} fill="none" stroke="#f5c95c" strokeWidth="11" strokeLinejoin="round" />
        <Layer d={RAMPS} fill="none" stroke="#ffe18a" strokeWidth="6" strokeLinejoin="round" />
        <Layer d={HIGHWAYS} fill="none" stroke="#f5c95c" strokeWidth="20" strokeLinejoin="round" />
        <Layer d={HIGHWAYS} fill="none" stroke="#ffe495" strokeWidth="12" strokeLinejoin="round" />
        <path d="M657 370V1590" stroke="#f5c95c" strokeWidth="24" />
        <path d="M651 370V1590M664 370V1590" stroke="#ffe08a" strokeWidth="8" />
        <circle cx="2385" cy="1848" r="10" fill="#fff" />
        {PLACES.map(([t, x, y, s, c]) => (
          <text key={s + y} x={x + TILES[t][0]} y={y + TILES[t][1]} textAnchor="middle" className={c} {...halo}>{s}</text>
        ))}
        <g className="fill-[#94561c] text-[28px]" {...halo}>
          <text transform="translate(1068 82) rotate(12)">Sam</text>
          <text transform="translate(1132 92) rotate(-33)">Rayburn</text>
          <text transform="translate(1628 372) rotate(-102)">President</text>
          <text transform="translate(1608 246) rotate(-87)">George</text>
          <text transform="translate(1604 142) rotate(-32)">Bush</text>
          <text transform="translate(1656 120) rotate(-1)">Turnpike</text>
          <text transform="translate(1692 232) rotate(65)">I-35E Express</text>
          <text transform="translate(2580 740) rotate(73)">Dallas North Tollway</text>
          <text transform="translate(2636 1632) rotate(-85)">Dallas North Tollway</text>
        </g>
        <text transform="translate(82 38) rotate(20)" className="fill-[#6a8fc4] text-[36px]">ne L</text>
        <g className="font-['Open_Sans'] text-[25px]">
          {SHIELDS.map(([t, x, y, s], i) => (
            <g key={i} transform={`translate(${x + TILES[t][0]} ${y + TILES[t][1]})`}>
              <rect x={s.length < 3 ? -24 : -30} y="-19" width={s.length < 3 ? 48 : 60} height="38" rx="18" fill="#fff" stroke="#5c5f66" strokeWidth="3" />
              <text y="9" textAnchor="middle" fill="#3c4043">{s}</text>
            </g>
          ))}
          <g transform="translate(141 1860)">
            <rect x="-31" y="-17" width="62" height="34" fill="#fff" stroke="#5c5f66" strokeWidth="3" />
            <text y="9" textAnchor="middle" fill="#3c4043">157</text>
          </g>
          {INTERSTATES.map(([t, x, y, s], i) => (
            <g key={i} transform={`translate(${x + TILES[t][0]} ${y + TILES[t][1]})`}>
              <path d="M-29-23Q-16-17 0-24Q16-17 29-23L30-10H-30Z" fill="#d75c5c" />
              <path d="M-30-13H30Q32 10 0 23Q-32 10-30-13Z" fill="#3a72c4" />
              <text y="10" textAnchor="middle" fill="#fff" className="text-[24px] font-bold">{s}</text>
            </g>
          ))}
        </g>
        <polygon points={BOUNDARY.map((p) => p.join(",")).join(" ")} fill="#3f51b5" fillOpacity="0.12" stroke="#3f51b5" strokeWidth="4" strokeLinejoin="round" />
        <MapDots pts={PURPLE} fill="#9c27b0" stroke="#7d1f93" />
        <MapDots pts={BLUE} fill="#03a0f5" stroke="#0288d1" />
        <MapDots pts={TEAL} fill="#00c4a7" stroke="#009e83" />
        <Pin x={2326} y={558} color="#34a853"><FaTree x={-17} y={-20} size={34} color="#fff" /></Pin>
        <Pin x={2311} y={1454} color="#1a73e8"><g transform="rotate(-90)"><FaPlane x={-18} y={-18} size={36} color="#fff" /></g></Pin>
        <Pin x={2197} y={1787} color="#78909c"><FaLandmark x={-16} y={-18} size={32} color="#fff" /></Pin>
        <Pin x={1111} y={2246} color="#34a853"><circle r="10" fill="#fff" /></Pin>
        <text x="78" y="2360" className="fill-white text-[54px] font-medium" stroke="#9a9a9a" strokeWidth="4" paintOrder="stroke">Google</text>
        <rect x="2243" y="2346" width="460" height="42" fill="#f5f5f5" fillOpacity="0.7" />
        <g className="fill-[#222] text-[29px]">
          <text x="2247" y="2376" textLength="224" lengthAdjust="spacingAndGlyphs">Map data ©2020</text>
          <text x="2508" y="2376" textLength="178" lengthAdjust="spacingAndGlyphs">Terms of Use</text>
        </g>
      </svg>

      <div className="absolute left-[10px] top-[10px] flex h-[45px] w-[86px] items-center rounded-full bg-[#f5f5f5] shadow-[0_0_2px_#aaa] ring-[5px] ring-inset ring-white">
        <span className="ml-[5px] flex h-[35px] w-[35px] items-center justify-center rounded-full bg-[#3f51b5]">
          <svg width="17" height="20" viewBox="0 0 17 20"><path d="M8.500 0A8 8 0 0 0 .5 8C.5 13 5 15 8.500 20C12 15 16.500 13 16.500 8A8 8 0 0 0 8.500 0Z" fill="#fff" /><circle cx="8.500" cy="7.500" r="4" fill="#3f51b5" /></svg>
        </span>
        <svg width="20" height="15" viewBox="0 0 20 15" className="ml-[13px]" stroke="#3f51b5" strokeWidth="1.700"><path d="M0 1.500h2M5 1.500h15M0 7.500h2M5 7.500h15M0 13.500h2M5 13.500h15" /></svg>
      </div>

      <div className="absolute right-[10px] top-[10px] flex h-10 w-10 items-center justify-center rounded-sm bg-white shadow">
        <svg width="18" height="18" viewBox="0 0 18 18" fill="none" stroke="#666" strokeWidth="2.600"><path d="M1.300 6V1.300H6M12 1.300h4.700V6M16.700 12v4.700H12M6 16.700H1.300V12" /></svg>
      </div>

      <div className="absolute right-[14px] top-[60px] flex h-[116px] w-[30px] flex-col items-center rounded-sm bg-white shadow">
        <div className="flex h-[18px] w-[22px] items-center justify-center gap-[2px] border-b border-[#d4d4d4]">
          <i className="h-1 w-1 rounded-full bg-[#aaa]" /><i className="h-1 w-1 rounded-full bg-[#aaa]" /><i className="h-1 w-1 rounded-full bg-[#aaa]" />
        </div>
        <div className="flex h-[31px] w-[22px] items-center border-b border-[#d4d4d4]">
          <svg width="22" height="22" viewBox="0 0 22 22" fill="none" stroke="#fff" strokeWidth="1.100"><circle cx="11" cy="11" r="11" fill="#9c27b0" stroke="none" /><path d="M4 11L11 4.500L18 11M6 10V17H16V10M8.500 17V14.500Q11 12.500 13.500 14.500V17" /><circle cx="11" cy="10.800" r="1.600" /></svg>
        </div>
        <div className="flex h-[31px] w-[22px] items-center border-b border-[#d4d4d4]">
          <svg width="22" height="22" viewBox="0 0 22 22" fill="none" stroke="#fff" strokeWidth="1.100"><circle cx="11" cy="11" r="11" fill="#039ff7" stroke="none" /><path d="M8 8V4.500H16V18H8V13.500M13.500 10V12.500M6 8.500L5 10M8 8.500L9 10" /><path d="M4.500 10.300H9.500V12.700H4.500Z" fill="#fff" /></svg>
        </div>
        <div className="flex h-[31px] w-[22px] items-center">
          <svg width="22" height="22" viewBox="0 0 22 22" fill="none" stroke="#fff" strokeWidth="1.100"><circle cx="11" cy="11" r="11" fill="#00c4a7" stroke="none" /><path d="M4.500 10V7H12V10M3 10H5.500V12.500H11V10H13.500V15H3ZM4.500 15V16.500M12 15V16.500M15.500 10V17M14 17H17M12.500 9.500Q12.500 4.500 15.500 4.500T18.500 9.500Z" /></svg>
        </div>
      </div>

      <div className="absolute right-[10px] top-[354px] flex h-[81px] w-10 flex-col items-center rounded-sm bg-white shadow">
        <div className="flex h-10 w-[30px] items-center justify-center border-b border-[#e6e6e6]">
          <svg width="18" height="18" viewBox="0 0 18 18" fill="#666"><path d="M7 0h4v7h7v4h-7v7H7v-7H0V7h7z" /></svg>
        </div>
        <div className="flex h-10 items-center"><span className="h-1 w-[18px] bg-[#666]" /></div>
      </div>
    </section>
  );
}

/* ---------- charts ---------- */
function HBar({ y, end, x, max, color }: { y: number; end: number; x: number; max: number; color: string }) {
  return (
    <>
      <rect x={x} y={y - 3.500} width={max - x} height="7" rx="3.500" fill="#eeeeee" />
      <rect x={x} y={y - 3.500} width={end - x} height="7" rx="3.500" fill={color} />
    </>
  );
}

function RentalType() {
  const rows: [string, number, number, string][] = [["Entire Home", 1516.5, 538.5, "#9c27b0"], ["Private Room", 1560, 379.5, "#56b8fa"], ["Shared Room", 1603.5, 202, "#00c4a7"]];
  return (
    <section className={`mt-[26px] h-[308px] overflow-hidden ${CARD}`}>
      <div className="flex h-[71px] items-center justify-between bg-[#efefef] pl-5 pr-[19px] text-[#3f51b5]">
        <h1 className="text-[23px] font-light">369 Active Rentals</h1>
        <InfoIcon className="text-[#7985cb]" />
      </div>
      <CardHead title="Rental Type" note="55% Entire Home rentals" h="h-[52px]" />
      <svg width="881" height="185" viewBox="20 1485 881 185" className="block">
        <path d="M119.500 1495.500H125.500V1625M119.500 1625.500H869.500V1630M327.500 1495V1625M528.500 1495V1625M730.500 1495V1625M119.500 1517H125M119.500 1560H125M119.500 1604H125" fill="none" stroke="#f1f1f1" />
        {rows.map(([name, y, end, color]) => (
          <g key={name}>
            <text x="116" y={y + 4.500} textAnchor="end" className={LABEL}>{name}</text>
            <HBar y={y} end={end} x={125} max={869} color={color} />
          </g>
        ))}
        {[[125.5, 0], [327.5, 100], [528.5, 200], [730.5, 300]].map(([x, v]) => (
          <text key={v} x={x} y="1640" textAnchor="middle" className={LABEL}>{v}</text>
        ))}
      </svg>
    </section>
  );
}

function RentalChannel() {
  const cell = "flex w-[100px] flex-col items-center";
  const top = "flex h-[38px] w-full items-center justify-center border-b border-[#ececec]";
  const pct = "pt-px text-[15px] font-bold leading-6 text-[#555]";
  return (
    <section className={`mt-5 h-[143px] ${CARD}`}>
      <CardHead title="Rental Channel" h="h-[64px]" />
      <div className="flex justify-center gap-[30px]">
        <div className={cell}>
          <div className={`${top} gap-[2px] text-[#ff5a5f]`}>
            <FaAirbnb size={21} />
            <span className="font-['Lato'] text-[16px] font-bold tracking-[-0.6px]">airbnb</span>
          </div>
          <span className={pct}>86%</span>
        </div>
        <div className={cell}>
          <div className={top}>
            <svg width="68" height="26" viewBox="0 0 68 26">
              <defs>
                <linearGradient id="vrbo" gradientUnits="userSpaceOnUse" x1="0" y1="0" x2="4" y2="1" spreadMethod="repeat">
                  <stop offset="0" stopColor="#1a3f92" /><stop offset="0.65" stopColor="#2f74d0" /><stop offset="0.75" stopColor="#d9ecfa" /><stop offset="1" stopColor="#8cbdec" />
                </linearGradient>
                <linearGradient id="vrboV" gradientUnits="userSpaceOnUse" x1="2" y1="0" x2="20" y2="-3">
                  <stop offset="0.1" stopColor="#2c6bd0" /><stop offset="0.35" stopColor="#6aa5e6" /><stop offset="0.4" stopColor="#f08c52" /><stop offset="0.6" stopColor="#e9c79c" /><stop offset="0.7" stopColor="#2655a8" />
                </linearGradient>
              </defs>
              <text x="3" y="22" textLength="61" lengthAdjust="spacingAndGlyphs" strokeWidth="0.900" className="font-['Liberation_Serif'] text-[27px] font-bold italic"><tspan fill="url(#vrboV)" stroke="url(#vrboV)">V</tspan><tspan fill="url(#vrbo)" stroke="url(#vrbo)">rbo</tspan></text>
            </svg>
          </div>
          <span className={pct}>7%</span>
        </div>
        <div className={cell}>
          <div className={`${top} whitespace-nowrap text-[14px] text-[#555]`}>Listed on Both</div>
          <span className={pct}>7%</span>
        </div>
      </div>
    </section>
  );
}

function RentalSize() {
  const bars: [number, number, string][] = [[141.5, 2022.5, "Studio"], [274, 1915, "1"], [406.5, 1956, "2"], [538.5, 2000.5, "3"], [671, 2007, "4"], [803.5, 2014.5, "5+"]];
  return (
    <section className={`mt-5 h-[257px] ${CARD}`}>
      <CardHead title="Rental Size" note="2.1 Bedrooms / 5.8 Guests on average" h="h-[52px]" />
      <svg width="881" height="200" viewBox="20 1905 881 200" className="block">
        <path d="M69 1915.500H75.500V2045M75 1945.500H869M75 1977.500H869M75 2008.500H869M75 2040.500H869.500V2045" fill="none" stroke="#f3f3f3" />
        {[[1945.5, 60], [1977.5, 40], [2008.5, 20], [2040.5, 0]].map(([y, v]) => (
          <text key={v} x="69" y={y + 3.500} textAnchor="end" className={LABEL}>{v}</text>
        ))}
        {bars.map(([x, y, name]) => (
          <g key={name}>
            <rect x={x - 5} y="1915" width="10" height="125" rx="5" fill="#eeeeee" />
            <rect x={x - 5} y={y} width="10" height={2040 - y} rx="5" fill="#3f51b5" />
            <text x={x} y="2058" textAnchor="middle" className={LABEL}>{name}</text>
          </g>
        ))}
        <text x="803.500" y="2071" textAnchor="middle" className={LABEL}>Rooms</text>
      </svg>
    </section>
  );
}

function RentalGrowth() {
  const ys = [2267.5, 2266, 2264.5, 2262, 2248.2, 2248.2, 2243, 2239, 2233.5, 2229.3, 2215.4, 2218, 2222];
  const pts: Pt[] = ys.map((y, i) => [101 + i * 61.47, y]);
  const slope = (i: number) => {
    if (i === 0 || i === ys.length - 1) return 0;
    const a = ys[i] - ys[i - 1];
    const b = ys[i + 1] - ys[i];
    return a * b <= 0 ? 0 : (2 * a * b) / (a + b);
  };
  const line = pts
    .map(([x, y], i) => (i === 0 ? `M${x} ${y}` : `C${x - 41} ${pts[i - 1][1] + slope(i - 1) / 3} ${x - 20.5} ${y - slope(i) / 3} ${x} ${y}`))
    .join("");
  const quarters = ["Q3 '17", "Q4 '17", "Q1 '18", "Q2 '18", "Q3 '18", "Q4 '18", "Q1 '19", "Q2 '19", "Q3 '19", "Q4 '19", "Q1 '20", "Q2 '20", "Q3 '20"];
  return (
    <section className={`mt-5 h-[255px] ${CARD}`}>
      <div className="flex h-[70px] justify-between px-5 pt-4">
        <h2 className="text-[16px] leading-6 text-[#6b6b6b]">Rental Growth</h2>
        <div className="text-right text-[14px] font-light leading-[19px] text-[#a9a9a9]">
          <div className="pt-[2px]">-4% Quarterly Growth</div>
          <div className="flex items-center justify-end gap-1"><InfoIcon className="text-[#b5b5b5]" />Jul '17 - Vrbo Data Added</div>
        </div>
      </div>
      <svg width="881" height="180" viewBox="20 2200 881 180" className="block">
        <path d="M64 2215.500H70.500V2326M70 2222.500H869M70 2242.500H869M70 2261.500H869M70 2281.500H869M70 2300.500H869M66 2320.500H869.500V2325" fill="none" stroke="#f2f2f2" />
        <path d={`${line}V2320H101Z`} fill="#00bf8a" fillOpacity="0.055" />
        <path d={line} fill="none" stroke="#00bcd4" strokeWidth="2" />
        {[[2222.5, 500], [2242, 400], [2261.5, 300], [2281.5, 200], [2300.5, 100], [2320.5, 0]].map(([y, v]) => (
          <text key={v} x="64" y={y + 4} textAnchor="end" className={LABEL}>{v}</text>
        ))}
        {pts.map(([x, y], i) => (
          <g key={i}>
            <circle cx={x} cy={y} r="4" fill="#00bcd4" stroke="#26d0ae" strokeWidth="1.500" />
            <text x={x} y="2338" textAnchor="middle" className={LABEL}>{quarters[i].slice(0, 2)}</text>
            <text x={x} y="2351" textAnchor="middle" className={LABEL}>{quarters[i].slice(3)}</text>
          </g>
        ))}
      </svg>
    </section>
  );
}

function Amenities() {
  const rows: [string, number, number][] = [["Air Conditioning", 2480.5, 830.5], ["Heating", 2507.5, 752.5], ["Washer", 2534.5, 749.5], ["Dryer", 2561.5, 765], ["Kitchen", 2588.5, 813], ["Parking", 2615.5, 789], ["Internet", 2642.5, 847], ["Cable TV", 2674.5, 300], ["Pool", 2701.5, 437.5], ["Hot Tub", 2728.5, 201]];
  return (
    <section className={`mt-5 h-[382px] ${CARD}`}>
      <CardHead title="Amenities" h="h-[55px]" />
      <svg width="881" height="320" viewBox="20 2460 881 320" className="block">
        <path d="M134 2467.500H140.500V2742M285.500 2467V2742M430.500 2467V2742M575.500 2467V2742M719.500 2467V2742M864.500 2467V2742M134 2742.500H864.500V2748" fill="none" stroke="#f1f1f1" />
        {rows.map(([name, y, end]) => (
          <g key={name}>
            <text x="131" y={y + 4.500} textAnchor="end" className={LABEL}>{name}</text>
            <HBar y={y} end={end} x={140} max={864} color="#3f51b5" />
          </g>
        ))}
        {[0, 20, 40, 60, 80, 100].map((v) => (
          <text key={v} x={140.5 + v * 7.24} y="2757" textAnchor="middle" className={LABEL}>{v}%</text>
        ))}
      </svg>
    </section>
  );
}

function Ratings() {
  const p: [number, number, string, string][] = [
    [384, 2903, "#6f5ceb", "#fbb03b"], [429.5, 2932.5, "#fbb03b", "#2196f3"], [436, 2989, "#2196f3", "#159b85"],
    [384, 3018.5, "#159b85", "#0f6ca5"], [340.5, 2984, "#0f6ca5", "#ff9800"], [333.5, 2930, "#ff9800", "#6f5ceb"],
  ];
  const names: [string, number, number][] = [["Accuracy", 381.5, 2881.5], ["Value", 464, 2923], ["Location", 464, 3008.5], ["Communication", 381.5, 3051.5], ["Cleanliness", 299.5, 3008.5], ["Check In", 299, 2923]];
  return (
    <section className={`mt-5 h-[277px] ${CARD}`}>
      <CardHead title="Airbnb Ratings" h="h-[53px]" />
      <svg width="881" height="215" viewBox="20 2860 881 215" className="block">
        <circle cx="384" cy="2959" r="70.500" fill="none" stroke="#f3f3f3" strokeWidth="1.600" />
        {p.map(([x, y, , c], i) => (
          <line key={i} x1={x} y1={y} x2={p[(i + 1) % 6][0]} y2={p[(i + 1) % 6][1]} stroke={c} />
        ))}
        {p.map(([x, y, c]) => <circle key={c} cx={x} cy={y} r="4" fill={c} />)}
        {names.map(([t, x, y]) => <text key={t} x={x} y={y} textAnchor="middle" className="fill-[#777] text-[11px]">{t}</text>)}
        <text x="519" y="2910" className="fill-[#777] text-[11px]">Overall Rating:</text>
        <text x="519" y="2930" className="fill-[#555] text-[15px] font-bold">4.62</text>
        <text x="519" y="2971" className="fill-[#777] text-[11px]">Rated at Least 4.5 Overall:</text>
        <text x="519" y="2991" className="fill-[#555] text-[15px] font-bold">85%</text>
      </svg>
    </section>
  );
}

function Donut({ cx, title, parts }: { cx: number; title: string; parts: { v: number; c: string; t?: [string, number, number] }[] }) {
  const cy = 3241;
  let a = 0;
  const pt = (r: number, f: number) => `${cx + r * Math.sin(f * 2 * Math.PI)} ${cy - r * Math.cos(f * 2 * Math.PI)}`;
  return (
    <g>
      {parts.map(({ v, c }) => {
        const s = a;
        a += v;
        const big = v > 0.5 ? 1 : 0;
        return <path key={c} d={`M${pt(80, s)}A80 80 0 ${big} 1 ${pt(80, a)}L${pt(60, a)}A60 60 0 ${big} 0 ${pt(60, s)}Z`} fill={c} stroke="#fff" strokeWidth="0.900" />;
      })}
      {parts.map(({ t }) => t && <text key={t[0]} x={t[1]} y={t[2]} textAnchor="middle" className="fill-white text-[9.500px] font-medium">{t[0]}</text>)}
      <text x={cx} y="3251" textAnchor="middle" className="fill-[#6b6b6b] text-[19px]">{title}</text>
    </g>
  );
}

function Activity() {
  return (
    <section className={`mt-5 h-[237px] ${CARD}`}>
      <CardHead title="Rental Activity" note="25% Available Full Time" h="h-[46px]">
        <span className="pt-[3px]"><InfoIcon /></span>
      </CardHead>
      <svg width="881" height="180" viewBox="20 3150 881 180" className="block">
        <Donut cx={361} title="Available" parts={[
          { v: 0.513, c: "#8390f8", t: ["51%", 431, 3247] }, { v: 0.237, c: "#6b7ce6", t: ["24%", 309.5, 3291] },
          { v: 0.143, c: "#5b69d2", t: ["14%", 298, 3214] }, { v: 0.107, c: "#3f4fb8", t: ["11%", 337.5, 3178] },
        ]} />
        <Donut cx={561} title="Booked" parts={[
          { v: 0.753, c: "#83cefe", t: ["75%", 609.5, 3294] }, { v: 0.162, c: "#5ac1fe", t: ["16%", 500.5, 3209] },
          { v: 0.063, c: "#03a9fd", t: ["6%", 537, 3178] }, { v: 0.022, c: "#1499fc" },
        ]} />
      </svg>
    </section>
  );
}

function Stack({ title, items }: { title: string; items: [string, number, string][] }) {
  return (
    <div className="px-5">
      <div className="text-[12px] leading-[17px] text-[#7a7a7a]">{title}</div>
      <div className="flex h-5 gap-px">
        {items.map(([t, w, c]) => (
          <div key={t + w} className="flex items-center justify-center overflow-hidden whitespace-nowrap text-[10.500px] font-semibold text-white" style={{ width: w, background: c }}>{t}</div>
        ))}
      </div>
    </div>
  );
}

function Settings() {
  return (
    <section className={`mt-5 h-[171px] ${CARD}`}>
      <CardHead title="Rental Settings" h="h-[57px]" />
      <Stack title="Cancellation Policy" items={[["flexible", 385, "#64c9ad"], ["moderate", 201, "#3f51b5"], ["strict", 249, "#ff9648"], ["", 1, "#f6d9a0"]]} />
      <div className="h-5" />
      <Stack title="Minimum Stay" items={[["1Night", 477, "#2196f3"], ["2", 157, "#6f5ceb"], ["3", 53, "#0f6ca5"], ["4-6", 23, "#3f51b5"], ["7-29", 36, "#ff9800"], ["30+", 88, "#64c9ad"]]} />
    </section>
  );
}

export default function App() {
  return (
    <div className="relative h-[3552px] w-[929px] overflow-hidden bg-[#f1f3fd] font-['Open_Sans',sans-serif]">
      <div className="w-[921px]">
        <Header />
        <main className="w-[901px] pl-5">
          <div className="flex items-start pt-5">
            <Select text="Irving" />
            <div className="w-[18px]" />
            <Select text="All Neighborhoods / Zip Codes" />
            <button className="ml-[27px] h-10 w-[95px] rounded bg-[#00c4a7] text-[13px] font-bold text-white">Purchase</button>
          </div>
          <MarketGrade />
          <div className="mt-5 flex gap-[15px]">
            {STATS.map((s, i) => <StatCard key={s.title} s={s} i={i} />)}
          </div>
          <CityMap />
          <RentalType />
          <RentalChannel />
          <RentalSize />
          <RentalGrowth />
          <Amenities />
          <Ratings />
          <Activity />
          <Settings />
        </main>
      </div>
      <div className="absolute right-0 top-0 h-[222px] w-2 rounded-full bg-[#c8c8cb]" />
      <div className="absolute right-0 top-[1110px] h-[222px] w-2 rounded-full bg-[#c8c8cb]" />
      <div className="absolute right-0 top-[2220px] h-[222px] w-2 rounded-full bg-[#c8c8cb]" />
      <div className="absolute right-0 top-[3330px] h-[222px] w-2 rounded-full bg-[#c8c8cb]" />
      <div className="absolute bottom-0 left-0 top-[60px] w-px bg-[#e0e4f4]" />
    </div>
  );
}
